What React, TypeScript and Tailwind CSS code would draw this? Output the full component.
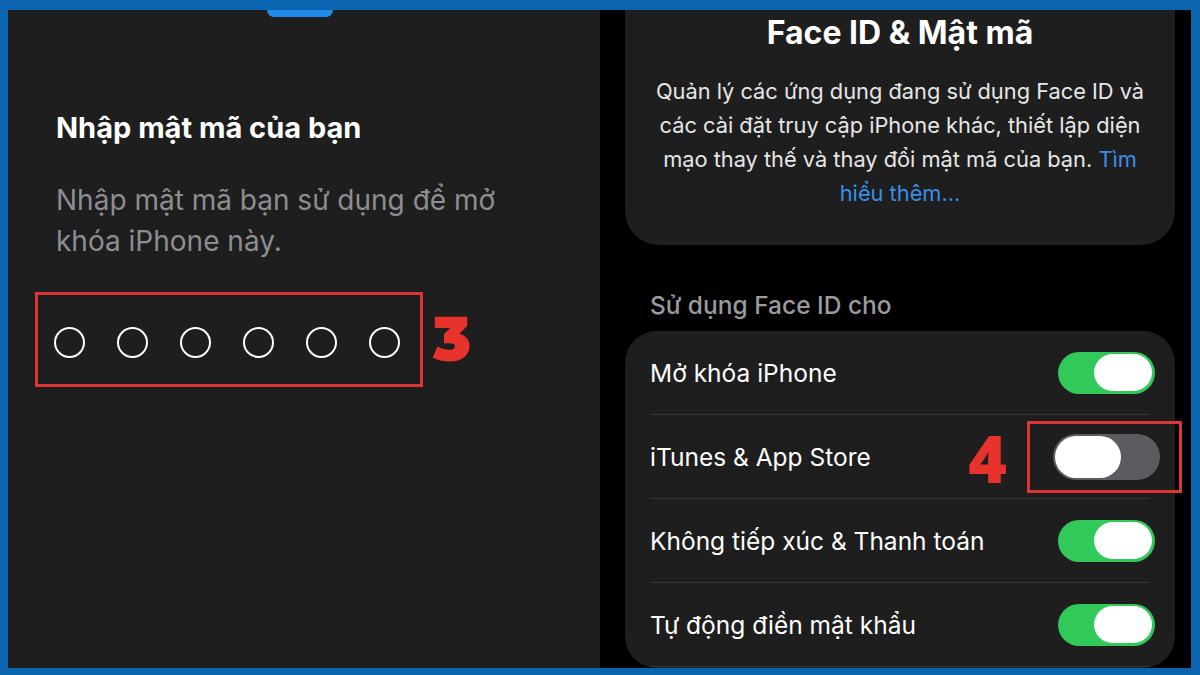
import React from "react";

const font = { fontFamily: "Inter, 'Noto Sans', sans-serif" };

function Toggle({ on }: { on: boolean }) {
  if (on) {
    return (
      <div className="w-[97px] h-[42px] rounded-full bg-[#31c95a] flex items-center justify-end pr-[3px] -mr-[5px]">
        <div className="w-[58px] h-[37px] rounded-full bg-white" />
      </div>
    );
  }
  return (
    <div className="w-[107px] h-[46px] rounded-full bg-[#5b5b60] flex items-center justify-start pl-[2px]">
      <div className="w-[66px] h-[42px] rounded-full bg-white" />
    </div>
  );
}

export default function App() {
  const rows = [
    { label: "Mở khóa iPhone", on: true },
    { label: "iTunes & App Store", on: false },
    { label: "Không tiếp xúc & Thanh toán", on: true },
    { label: "Tự động điền mật khẩu", on: true },
  ];
  return (
    <div
      className="w-[1200px] h-[675px] bg-[#0b64ae] pt-[10px] pl-[8px] pr-[9px] pb-[7px] flex overflow-hidden"
      style={font}
    >
      {/* Left panel */}
      <div className="relative w-[592px] h-full bg-[#1e1e1e] pl-[48px] pt-[99px]">
        <div className="absolute top-0 left-[259px] w-[66px] h-[7px] rounded-b-[7px] bg-[#1f8ae8]" />
        <div className="text-white text-[29px] font-bold leading-[38px]">Nhập mật mã của bạn</div>
        <div className="mt-[33px] text-[#8d8d92] text-[28px] leading-[41px] w-[480px]">
          Nhập mật mã bạn sử dụng để mở khóa iPhone này.
        </div>
        <div className="mt-[30px] flex items-center">
          <div className="-ml-[21px] w-[388px] h-[95px] border-[3px] border-[#dc3535] flex items-center pl-[16px] pt-[5px] gap-[32px]">
            {[0, 1, 2, 3, 4, 5].map((i) => (
              <div key={i} className="w-[31px] h-[31px] rounded-full border-2 border-white" />
            ))}
          </div>
          <div className="ml-[10px] text-[#e8332c] text-[62px] font-black leading-none mt-[-2px]" style={{ fontFamily: "Montserrat, 'Open Sans', 'Noto Sans', sans-serif" }}>
            3
          </div>
        </div>
      </div>

      {/* Right panel */}
      <div className="flex-1 h-full bg-black pl-[25px] pr-[16px] flex flex-col">
        <div className="bg-[#1e1e1e] rounded-b-[34px] h-[235px] flex flex-col items-center pt-[4px]">
          <div className="text-white text-[32px] font-bold leading-[38px]">Face ID &amp; Mật mã</div>
          <div className="mt-[22px] text-[#e6e6e6] text-[21.8px] leading-[34px] text-center w-[505px]">
            Quản lý các ứng dụng đang sử dụng Face ID và các cài đặt truy cập iPhone khác, thiết lập diện mạo thay thế và thay đổi mật mã của bạn.{" "}
            <span className="text-[#3a8ee8]">Tìm hiểu thêm...</span>
          </div>
        </div>
        <div className="mt-[46px] pl-[25px] text-[#9a9a9f] text-[24.5px] font-medium leading-[28px]">Sử dụng Face ID cho</div>
        <div className="mt-[12px] bg-[#1e1e1e] rounded-[32px] flex-1 px-[25px] flex flex-col">
          {rows.map((r, i) => (
            <div
              key={i}
              className="h-[84px] shrink-0 flex items-center justify-between border-b border-[#363638]"
            >
              <div className="text-white text-[24.5px] leading-[30px]">{r.label}</div>
              {r.on ? (
                <Toggle on />
              ) : (
                <div className="flex items-center">
                  <div className="text-[#e8332c] text-[66px] font-extrabold leading-none mr-[20px]" style={{ fontFamily: "'Open Sans', 'Noto Sans', sans-serif" }}>
                    4
                  </div>
                  <div className="w-[155px] h-[72px] border-[3px] border-[#dc3535] flex items-center pl-[23px] -mr-[32px]">
                    <Toggle on={false} />
                  </div>
                </div>
              )}
            </div>
          ))}
        </div>
      </div>
    </div>
  );
}
